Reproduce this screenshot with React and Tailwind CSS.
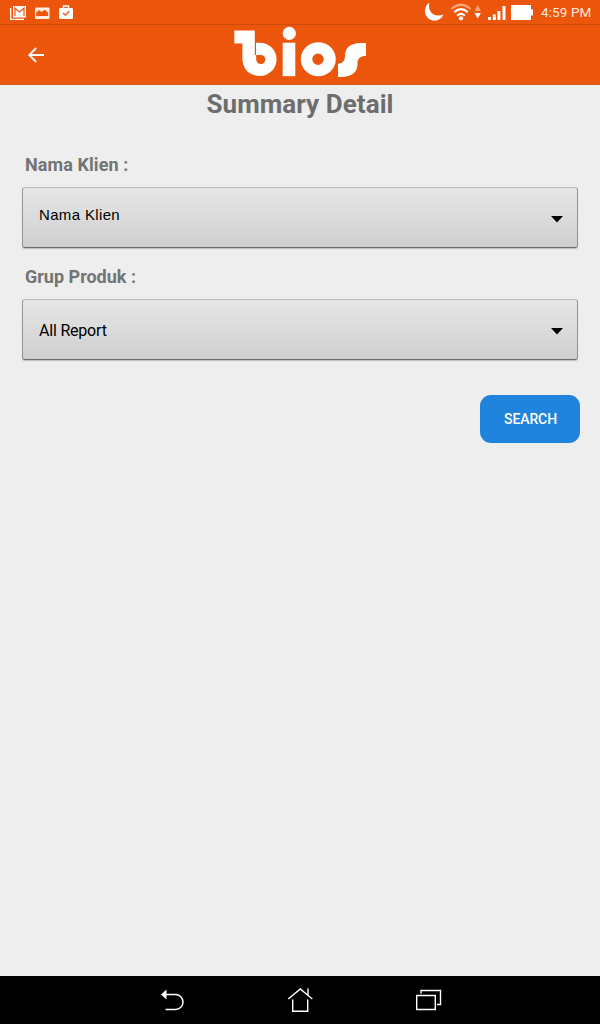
import React from "react";

function StatusBar() {
  return (
    <div className="flex h-[25px] shrink-0 items-center justify-between border-b border-[#cf4a0b] bg-[#ec550c]">
      <svg className="h-6 w-20" viewBox="0 0 80 24" fill="none">
        <path d="M10.700 8v11.300H24" stroke="#fff" strokeWidth="1.300" />
        <path d="M13 6h13v11.500H13z" fill="#fff" />
        <path d="M15 16V8l4.500 4L24 8v8" stroke="#ec550c" strokeWidth="1.200" />
        <rect x="35" y="7.500" width="14.500" height="11.500" rx="1" fill="#ffede0" />
        <path d="M36.200 16v-3.500l2.800-2.500 2.600 2 3.200-2.200 3.400 3V16z" fill="#ec550c" />
        <path d="M63.500 8V6h5v2" stroke="#fff" strokeWidth="1.500" />
        <rect x="59" y="8" width="14" height="11" rx="1.200" fill="#fff" />
        <path d="m63 13 2.300 2.200 4-4" stroke="#ec550c" strokeWidth="1.300" />
      </svg>
      <div className="flex items-center">
        <svg className="h-6 w-[121px]" viewBox="415 0 121 24" fill="none">
          <path d="M429.500 2.500C424 6 423.500 14 428 18C433 22.500 440.500 21 443.500 14.500C438 16.500 433 15.500 430.500 11.500C428.800 8.500 428.500 5 429.500 2.500Z" fill="#fff" />
          <path d="M451.500 9Q461 .500 470.500 9" stroke="#f8a47a" strokeWidth="2.200" />
          <path d="M454.300 12.300Q461 6 467.700 12.300M457.200 15.700Q461 12 464.800 15.700" stroke="#fff" strokeWidth="2.100" />
          <circle cx="461" cy="18.300" r="2.100" fill="#fff" />
          <path d="M474.500 11 477.700 5l3.200 6z" fill="#f8a47a" />
          <path d="m474.500 13 3.200 5.500 3.200-5.500z" fill="#fff" />
          <path d="M488 17h3v3h-3zM492.800 14.500h3V20h-3zM497.400 11h3v9h-3z" fill="#fff" />
          <path d="M502.500 6h3v14h-3z" fill="#fff" />
          <path d="M511 5h20v4.500h2v6h-2V20h-20z" fill="#fff" />
        </svg>
        <span className="mr-2 ml-[5px] w-[51px] whitespace-nowrap font-[Roboto,sans-serif] text-[13.500px] leading-6 tracking-[0.1px] text-[#ffe9df]">4:59 PM</span>
      </div>
    </div>
  );
}

function AppBar() {
  return (
    <header className="grid h-[60px] shrink-0 grid-cols-[1fr_160px_1fr] items-center border-b border-[#d4581e] bg-[#ec550c]">
      <svg className="ml-7 h-4 w-4" viewBox="0 0 16 16" fill="none" stroke="#fff" strokeWidth="1.800">
        <path d="M16 8H1.800M8.200 1 1.200 8l7 7" />
      </svg>
      <svg className="h-[59px] w-40" viewBox="220 25 160 59" fill="#fff">
        <path d="M234.300 30.500H254.800V42.700H259.800A16.800 16.600 0 0 1 259.800 75.900C249 75.900 242.400 69 242.400 58V43.500H234.300Z" />
        <path d="M254.800 42.700H256V55H260.800A4.600 4.600 0 1 1 256.200 59.600V55H254.800Z" fill="#ec550c" />
        <circle cx="289.300" cy="33.400" r="6.600" />
        <path d="M282.700 42.700H295.300V76.200H282.700Z" />
        <path fillRule="evenodd" d="M300.800 59.300a17.500 17 0 1 0 35 0a17.500 17 0 1 0-35 0M312.300 59.300a5.700 5.700 0 1 1 11.400 0a5.700 5.700 0 1 1-11.400 0" />
        <path d="M366 43H361C350 43 345 48 345 56C345 61 342 63.700 338 63.700V77H341C352 77 357.500 72 357.500 64C357.500 58.500 360 56 366 56Z" />
      </svg>
    </header>
  );
}

function Select({ children, className, arrow }) {
  return (
    <button className="flex h-[61px] w-full items-start justify-between rounded-[3px] border border-t-[#bcbcbc] border-r-[#939393] border-b-[#6f6f6f] border-l-[#969696] bg-linear-to-b from-[#e7e7e7] to-[#cfcfcf] pr-3.5 pl-4 text-black shadow-[0_1px_1px_#bdbdbd]">
      <span className={className}>{children}</span>
      <svg className={arrow} viewBox="0 0 12 7">
        <path d="M0 0h12L6 6.500z" />
      </svg>
    </button>
  );
}

function NavBar() {
  return (
    <nav className="flex h-12 shrink-0 items-center justify-center gap-[100px] bg-black">
      <svg className="h-7 w-7" viewBox="158 986 28 28" fill="none" stroke="#fff" strokeWidth="1.500">
        <path d="M165 994.500h10.500a7.500 7.500 0 0 1 0 15H165.500" />
        <path d="m161 994.500 5.500-5v10z" fill="#fff" stroke="none" />
      </svg>
      <svg className="h-7 w-7" viewBox="286 986 28 28" fill="none" stroke="#fff" strokeWidth="1.400">
        <path d="m288.300 999 12-10 12 10M308 995v-6.500M292.700 999.500v11.800h15v-11.800" />
      </svg>
      <svg className="h-7 w-7" viewBox="414 986 28 28" fill="none" stroke="#fff" strokeWidth="1.400">
        <path d="M416.700 995.500h18.600v14h-18.600zM421 993.500v-3h19.500v14h-3.500" />
      </svg>
    </nav>
  );
}

export default function App() {
  return (
    <div className="flex h-[1024px] w-[600px] flex-col bg-[#eeeeee] font-[Roboto,sans-serif]">
      <StatusBar />
      <AppBar />
      <main className="flex flex-1 flex-col px-[22px]">
        <h1 className="mt-px h-9 text-center text-[26px] leading-9 font-bold tracking-[0.06px] text-[#6d6d6d]">Summary Detail</h1>
        <label className="mt-[31px] mb-[10px] pl-[3px] text-[18px] leading-6 font-bold tracking-[0.08px] text-[#747474]">Nama Klien :</label>
        <Select className="mt-[17px] font-['Liberation_Sans',sans-serif] text-[15px] leading-5 tracking-[0.35px]" arrow="mt-[28px] h-[7px] w-3">Nama Klien</Select>
        <label className="mt-[17px] mb-[10px] pl-[3px] text-[18px] leading-6 font-bold text-[#747474]">Grup Produk :</label>
        <Select className="mt-[21px] text-[16px] leading-5 tracking-[-0.2px]" arrow="mt-[28px] h-[7px] w-3">All Report</Select>
        <button className="mt-[35px] -mr-0.5 h-12 w-[100px] self-end rounded-[11px] bg-[#2184dc] pl-px text-[14px] font-medium tracking-[-0.1px] text-white">SEARCH</button>
      </main>
      <NavBar />
    </div>
  );
}
